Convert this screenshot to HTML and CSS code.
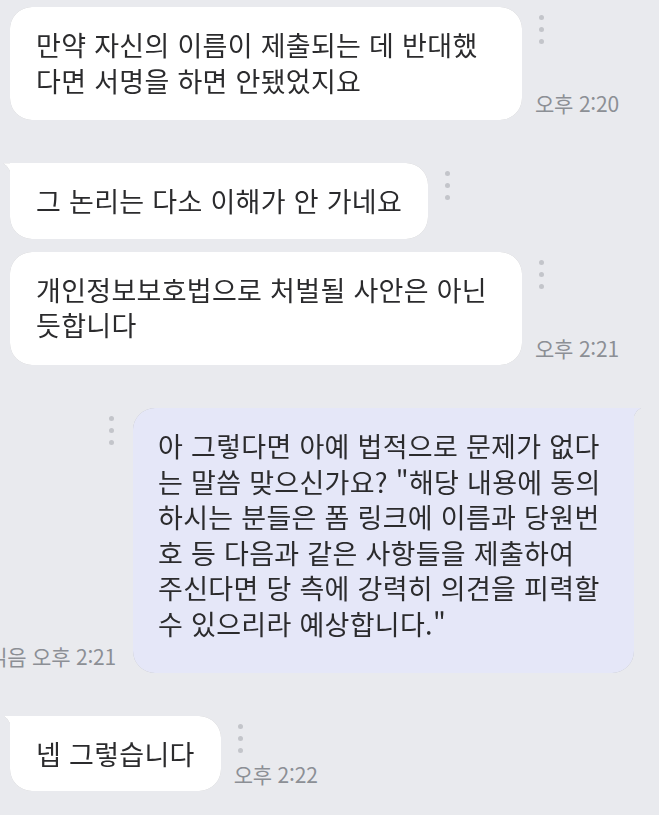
FILE: index.html
```html
<!DOCTYPE html>
<html lang="ko">

<head>
    <meta charset="UTF-8">
    <meta name="viewport" content="width=device-width, initial-scale=1.0">
    <title>대화</title>
    <link rel="stylesheet" href="styles.css">
</head>

<body>
    <div class="chat">
        <!-- 받은 메시지 -->
        <div class="group">
            <div class="row">
                <div class="bubble wide">만약 자신의 이름이 제출되는 데 반대했<br>다면 서명을 하면 안됐었지요</div>
                <div class="side">
                    <span class="dots"><i></i><i></i><i></i></span>
                    <span class="time">오후 2:20</span>
                </div>
            </div>
        </div>

        <div class="group">
            <div class="row">
                <div class="bubble tail">그 논리는 다소 이해가 안 가네요</div>
                <div class="side">
                    <span class="dots"><i></i><i></i><i></i></span>
                </div>
            </div>
            <div class="row">
                <div class="bubble wide">개인정보보호법으로 처벌될 사안은 아닌<br>듯합니다</div>
                <div class="side">
                    <span class="dots"><i></i><i></i><i></i></span>
                    <span class="time">오후 2:21</span>
                </div>
            </div>
        </div>

        <!-- 보낸 메시지 -->
        <div class="group">
            <div class="row me">
                <div class="side">
                    <span class="dots"><i></i><i></i><i></i></span>
                    <span class="time">읽음 오후 2:21</span>
                </div>
                <div class="bubble mine tail">아 그렇다면 아예 법적으로 문제가 없다<br>는 말씀 맞으신가요? "해당 내용에 동의<br>하시는 분들은 폼 링크에 이름과 당원번<br>호 등 다음과 같은 사항들을 제출하여<br>주신다면 당 측에 강력히 의견을 피력할<br>수 있으리라 예상합니다."</div>
            </div>
        </div>

        <div class="group">
            <div class="row">
                <div class="bubble tail">넵 그렇습니다</div>
                <div class="side">
                    <span class="dots"><i></i><i></i><i></i></span>
                    <span class="time">오후 2:22</span>
                </div>
            </div>
        </div>
    </div>
</body>

</html>
```

FILE: styles.css
```css
/* reset */
* {
    margin: 0;
    padding: 0;
    box-sizing: border-box;
}

body {
    background: #e9eaee;
    font-family: "Noto Sans CJK KR", "Noto Sans", sans-serif;
    color: #2b2b2d;
    overflow: hidden;
}

.chat {
    display: flex;
    flex-direction: column;
    gap: 43px;
    padding: 7px 25px 0 10px;
}

.group {
    display: flex;
    flex-direction: column;
    gap: 13px;
}

.row {
    display: flex;
    align-items: stretch;
}

/* 내가 보낸 줄은 오른쪽 정렬 */
.row.me {
    justify-content: flex-end;
}

/* 말풍선 */
.bubble {
    flex: none;
    position: relative;
    padding: 20px 26px;
    font-size: 27px;
    line-height: 35.6px;
    letter-spacing: 0.3px;
    white-space: nowrap;
    background: #fff;
    border-radius: 22px;
    filter: drop-shadow(0 0 0.6px rgba(0, 0, 0, 0.22));
}

.bubble.wide {
    width: 512px;
    padding-bottom: 22px;
}

.bubble.mine {
    width: 501px;
    padding: 20px 26px 31px 25px;
    background: #e5e7f8;
}

/* 꼬리 */
.bubble.tail {
    border-top-left-radius: 0;
}

.bubble.tail::before {
    content: "";
    position: absolute;
    top: 0;
    left: -7px;
    width: 9px;
    height: 18px;
    background: inherit;
    clip-path: path('M0 0 H9 V18 Q8 4 0 0 Z');
}

.bubble.mine.tail {
    border-top-left-radius: 22px;
    border-top-right-radius: 0;
}

.bubble.mine.tail::before {
    left: auto;
    right: -7px;
    clip-path: path('M9 0 H0 V18 Q1 4 9 0 Z');
}

/* 점 + 시간 */
.side {
    display: flex;
    flex-direction: column;
    justify-content: space-between;
    align-items: flex-start;
    min-width: 0;
    padding: 8px 0 5px;
    margin-left: 13px;
    white-space: nowrap;
}

.me .side {
    align-items: flex-end;
    margin-left: 0;
    margin-right: 17px;
}

.dots {
    display: flex;
    flex-direction: column;
    gap: 7px;
    margin-left: 4px;
}

.me .dots {
    margin-left: 0;
    margin-right: 2px;
}

.dots i {
    width: 5px;
    height: 5px;
    background: #c3c5ca;
    border-radius: 50%;
}

.time {
    font-size: 21px;
    line-height: 24px;
    color: #8c8f95;
    letter-spacing: -0.2px;
}
```
